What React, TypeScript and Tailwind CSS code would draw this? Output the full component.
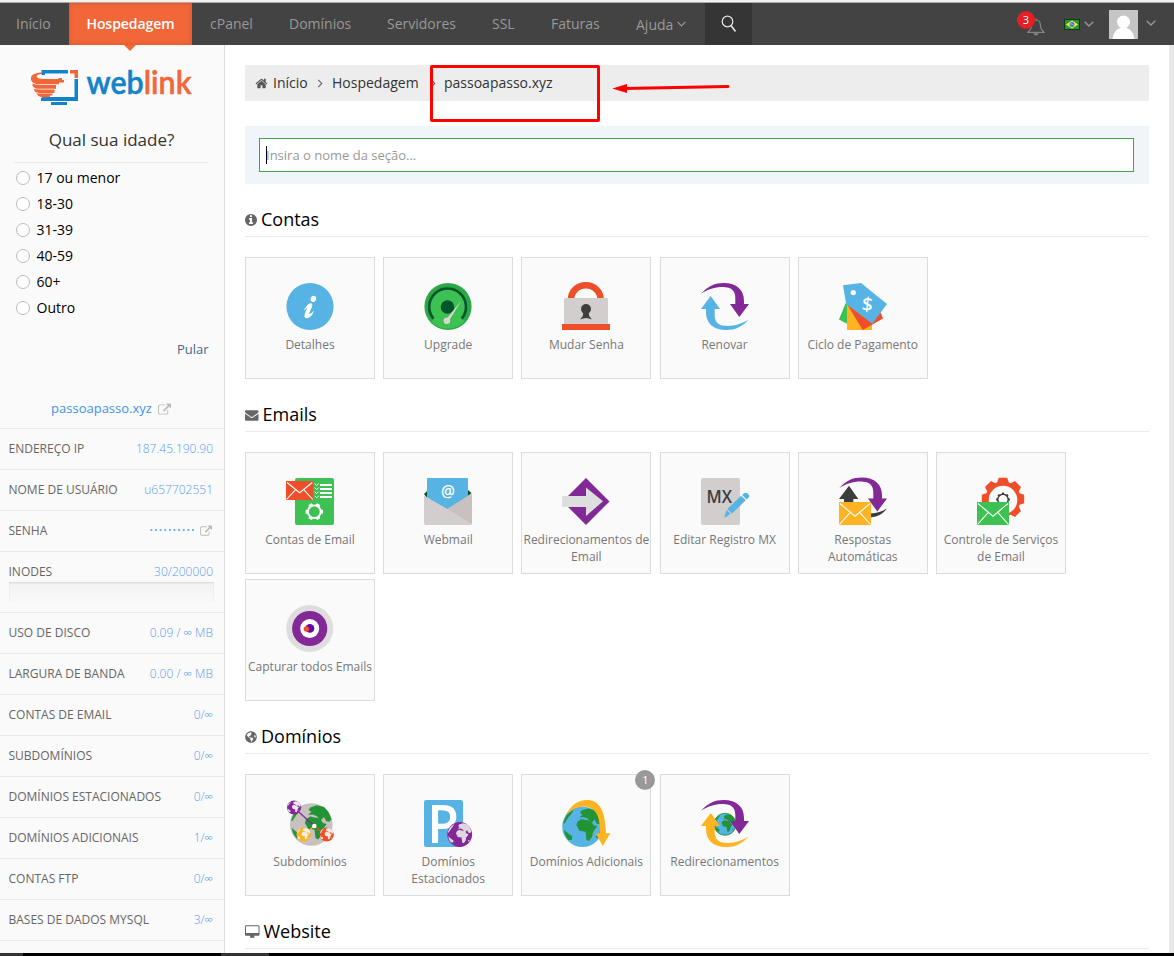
import React from "react";
import { FaGlobeAmericas } from "react-icons/fa";

const BLUE = "#56b3e3";
const PURPLE = "#832897";
const RED = "#ee4f2a";
const GREEN = "#3dc153";
const YELLOW = "#fdb322";
const LAND = "#229436";
const GREY = "#d1cecd";
const DARK = "#3d3d3d";

const SWOOP =
  "M0.3 10.5C7 3 14 0 22.5 0C36 0 43 7 43 18V21H48L38.3 34L29 21H34.3V15C34.3 8 31 4.6 24 4.2C15 3.6 8 6 0.3 10.5Z";

function Glyph({ d, box, className }: { d: string; box: string; className: string }) {
  return (
    <svg viewBox={box} className={className} fill="currentColor">
      <path d={d} />
    </svg>
  );
}

const EXTERNAL =
  "M1472 992v320q0 119-84.5 203.5t-203.5 84.5h-832q-119 0-203.5-84.5t-84.5-203.5v-832q0-119 84.5-203.5t203.5-84.5h704q14 0 23 9t9 23v64q0 14-9 23t-23 9h-704q-66 0-113 47t-47 113v832q0 66 47 113t113 47h832q66 0 113-47t47-113v-320q0-14 9-23t23-9h64q14 0 23 9t9 23zm384-864v512q0 26-19 45t-45 19-45-19l-176-176-652 652q-10 10-23 10t-23-10l-114-114q-10-10-10-23t10-23l652-652-176-176q-19-19-19-45t19-45 45-19h512q26 0 45 19t19 45z";
const HOME =
  "M1472 992v480q0 26-19 45t-45 19h-384v-384h-256v384h-384q-26 0-45-19t-19-45v-480q0-1 .5-3t.5-3l575-474 575 474q1 2 1 6zm223-69l-62 74q-8 9-21 11h-3q-13 0-21-7l-692-577-692 577q-12 8-24 7-13-2-21-11l-62-74q-8-10-7-23.5t11-21.5l719-599q32-26 76-26t76 26l244 204v-195q0-14 9-23t23-9h192q14 0 23 9t9 23v408l219 182q10 8 11 21.5t-7 23.5z";
const INFO =
  "M1152 1376v-160q0-14-9-23t-23-9h-96v-512q0-14-9-23t-23-9h-320q-14 0-23 9t-9 23v160q0 14 9 23t23 9h96v320h-96q-14 0-23 9t-9 23v160q0 14 9 23t23 9h448q14 0 23-9t9-23zm-128-896v-160q0-14-9-23t-23-9h-192q-14 0-23 9t-9 23v160q0 14 9 23t23 9h192q14 0 23-9t9-23zm640 416q0 209-103 385.5t-279.5 279.5-385.5 103-385.5-103-279.5-279.5-103-385.5 103-385.5 279.5-279.5 385.5-103 385.5 103 279.5 279.5 103 385.5z";
const MAIL =
  "M1792 710v794q0 66-47 113t-113 47h-1472q-66 0-113-47t-47-113v-794q44 49 101 87 362 246 497 345 57 42 92.5 65.5t94.5 48 110 24.5h2q51 0 110-24.5t94.5-48 92.5-65.5q170-123 498-345 57-39 100-87zm0-294q0 79-49 151t-122 123q-376 261-468 325-10 7-42.5 31t-54 38.5-52 32.5-57.5 27-50 9h-2q-23 0-50-9t-57.5-27-52-32.5-54-38.5-42.5-31q-91-64-262-182.5t-205-142.5q-62-42-117-115.5t-55-136.5q0-78 41.5-130t118.5-52h1472q65 0 112.5 47t47.5 113z";
const DESKTOP =
  "M1728 992v-832q0-13-9.5-22.5t-22.5-9.5h-1600q-13 0-22.5 9.5t-9.5 22.5v832q0 13 9.5 22.5t22.5 9.5h1600q13 0 22.5-9.5t9.5-22.5zm128-832v1088q0 66-47 113t-113 47h-544q0 37 16 77.5t32 71 16 43.5q0 26-19 45t-45 19h-512q-26 0-45-19t-19-45q0-14 16-44t32-70 16-78h-544q-66 0-113-47t-47-113v-1088q0-66 47-113t113-47h1600q66 0 113 47t47 113z";

function Globe({ x, y, r, sea, land, edge }: { x: number; y: number; r: number; sea: string; land: string; edge?: string }) {
  return (
    <g transform={`translate(${x} ${y}) scale(${r / 20})`}>
      <circle r="20" fill={sea} stroke={edge} strokeWidth={edge ? 1.6 : 0} />
      <g fill={land}>
        <path d="M-6-1.5L-5-5L-1-7.5L3-6.5L8-6L11-1.5L14.500-.5L10.500 5L9.500 10L6.500 14L4 13L3 5L-3 4Z" />
        <path d="M-3-9L0-12L-2.500-13.500L-1-16L5-18L12-16.500L16-12L19-5L17-2.500L14-3L12-7L9-4L5-8L1-9.500Z" />
        <path d="M-18.500 3L-15 6L-10 9.500L-10.500 13L-14 13L-17 8.500Z" />
        <path d="M-16-11L-9-17L-10-14L-14-9L-18-3L-19-4Z" />
        <circle cx="14.500" cy="10" r="1.300" />
      </g>
    </g>
  );
}

function Envelope({ w, h, y, color }: { w: number; h: number; y: number; color: string }) {
  return (
    <g>
      <rect y={y} width={w} height={h} fill={color} />
      <path
        d={`M1 ${y + 1.5}L${w / 2} ${y + h * 0.62}L${w - 1} ${y + 1.5}M0.500 ${y + h - 0.5}L${w * 0.36} ${y + h * 0.44}M${w - 0.5} ${y + h - 0.5}L${w * 0.64} ${y + h * 0.44}`}
        stroke="#fff"
        strokeWidth="1.1"
        fill="none"
      />
    </g>
  );
}

const teeth = (n: number, x: number, y: number, from: number, w: number, len: number, offset = 0) =>
  Array.from({ length: n }, (_, i) => (
    <path
      key={i}
      transform={`translate(${x} ${y}) rotate(${(i * 360) / n + offset})`}
      d={`M${-w / 2} ${-from}L${-w / 2 + w * 0.15} ${-from - len}H${w / 2 - w * 0.15}L${w / 2} ${-from}Z`}
    />
  ));

const art: Record<string, React.ReactNode> = {
  detalhes: (
    <>
      <circle cx="24" cy="23.500" r="23.600" fill={BLUE} />
      <ellipse cx="27.400" cy="15.900" rx="2.700" ry="3.200" transform="rotate(20 27.400 15.900)" fill="#fff" />
      <path d="M17.500 27.500C20 24 22 20.500 24.500 20.200C27 20 26.500 23 25.500 25C24 28.500 22.500 31 24 30.800C25.500 30.500 26.500 29 28 27.500C27 32 23.500 35.200 20.500 35.200C17.500 35 18 31.500 21.300 25C20 25.500 19 27 17.500 27.500Z" fill="#fff" />
    </>
  ),
  upgrade: (
    <>
      <circle cx="24" cy="23.500" r="23.600" fill="#2ba946" />
      <path d="M10 35.500A18.500 18.500 0 1 1 37 35.500L41 38A24 24 0 0 1 7 39Z" fill={GREEN} />
      <path d="M9.400 35.600A18.400 18.400 0 1 1 37.800 35.600" fill="none" stroke="#00552a" strokeWidth="2.600" />
      <circle cx="23.500" cy="24" r="6.800" fill="#00552a" />
      <path d="M37.300 17.800L24.500 38.500L22 36.500Z" fill="#d8d6cd" />
      <circle cx="22.900" cy="37.700" r="3.300" fill="#d8d6cd" />
    </>
  ),
  senha: (
    <>
      <path d="M9 16.500A14.800 14.300 0 0 1 38.600 16.500" fill="none" stroke={RED} strokeWidth="6.500" />
      <rect x="2" y="15" width="44" height="26.500" rx="1.500" fill={GREY} />
      <rect y="41" width="48" height="6" fill={RED} />
      <circle cx="24" cy="26" r="5" fill={DARK} />
      <path d="M21.500 28L20.800 33L18 36.500Q24 33.500 30 36.500L27.200 33L26.500 28Z" fill={DARK} />
    </>
  ),
  renovar: (
    <>
      <path d={SWOOP} fill={PURPLE} />
      <path d={SWOOP} fill={BLUE} transform="rotate(180 24 23.500)" />
    </>
  ),
  ciclo: (
    <>
      <path d="M6.700 20L0 36.500L8.500 41L12 26Z" fill={GREEN} />
      <path d="M8 21V47H33V36Z" fill={YELLOW} />
      <path d="M8.300 21.500L23.700 47L44 35.500L41.500 29Z" fill={RED} />
      <path d="M4 2.200L22 0L48 21L33.300 40.700L7.200 21Z" fill={BLUE} />
      <circle cx="14.300" cy="9.600" r="2.600" fill="#fff" />
      <text x="28.300" y="28" fontSize="19" fontWeight="600" textAnchor="middle" fill="#fff" transform="rotate(6 28.300 21)">$</text>
    </>
  ),
  contasEmail: (
    <>
      <rect x="9" width="39" height="47" rx="2" fill={GREEN} />
      <Envelope w={27.300} h={19} y={3} color={RED} />
      <path d="M34 7H46M34 11H46M34 15H46M34 19H46" stroke="#fff" strokeWidth="1.900" />
      <path d="M28.700 5.500L30.700 7.500L32.700 5.500M28.700 9.600L30.700 11.600L32.700 9.600M28.700 13.700L30.700 15.700L32.700 13.700M28.700 17.800L30.700 19.800L32.700 17.800" stroke="#fff" fill="none" />
      <circle cx="28.300" cy="33.700" r="6.300" fill="none" stroke="#fff" strokeWidth="1.800" />
      <g fill="#fff">{teeth(6, 28.3, 33.7, 6, 5, 2.700, 30)}</g>
    </>
  ),
  webmail: (
    <>
      <path d="M0 16L3 13V20ZM44 12L47.500 15L44 18Z" fill="#00552a" />
      <rect x="3" width="41" height="35" rx="1" fill={BLUE} />
      <path d="M0 17.500L23.300 31L48 15.500V45Q48 47 46 47H2Q0 47 0 45Z" fill={GREY} />
      <path d="M23.300 31L48 15.500V46Z" fill="#c9c0c0" />
      <text x="24" y="18.500" fontSize="15.500" fontWeight="600" textAnchor="middle" fill="#fff">@</text>
    </>
  ),
  redirEmail: (
    <>
      <path d="M24 0L47.500 23.400L24 47L0.500 23.400Z" fill={PURPLE} />
      <path d="M0 18H24V9.500L41 23.300L24 38V29H0Z" fill="#dedede" />
    </>
  ),
  mx: (
    <>
      <rect width="39" height="47" rx="2" fill={GREY} />
      <text x="5.500" y="24.500" fontSize="18" fontWeight="600" fill={DARK} textLength="25.500" lengthAdjust="spacingAndGlyphs">MX</text>
      <path d="M23 39.700L25.500 32L29.500 35.800L25.800 38.500ZM26.300 31L40.200 17.800L44.800 22.200L31 35.500ZM41.200 17L43 15.300Q45 14 47.200 16Q49.300 18.300 47.500 19.800L45.700 21.500Z" fill={BLUE} />
    </>
  ),
  respostas: (
    <>
      <path d={SWOOP} fill={PURPLE} transform="translate(0 -.5)" />
      <path d="M10 7.700L19.300 21H14.300V25H5V21H0Z" fill={DARK} />
      <path d="M48 30.300C44 36 39 38.800 31.500 39.200V35.500C38 35.500 43 33.500 48 30.300Z" fill={DARK} />
      <Envelope w={32} h={23} y={24} color={YELLOW} />
    </>
  ),
  controle: (
    <>
      <g fill={RED}>
        <circle cx="26" cy="21" r="17.500" />
        {teeth(8, 26, 21, 16, 12, 5.200)}
      </g>
      <circle cx="26" cy="22" r="14.300" fill="#fafafa" />
      <circle cx="26" cy="21.500" r="5.200" fill="none" stroke={DARK} strokeWidth="1.400" />
      <g fill={DARK}>{teeth(8, 26, 21.5, 5, 2.600, 1.900)}</g>
      <Envelope w={32} h={23} y={24} color={GREEN} />
    </>
  ),
  capturar: (
    <>
      <circle cx="23.700" cy="23.500" r="23.500" fill="#dedede" />
      <circle cx="23.700" cy="23.500" r="17.600" fill={PURPLE} />
      <circle cx="23.700" cy="23.500" r="9.500" fill="#fff" />
      <circle cx="23.900" cy="23.400" r="4.400" fill="#6408a8" />
      <circle cx="20.400" cy="24" r="2.800" fill={RED} />
    </>
  ),
  subdominios: (
    <>
      <Globe x={25.300} y={24.500} r={21.300} sea="#c9c0c0" land={LAND} />
      <path d="M10 9.500L28.300 26" stroke={PURPLE} strokeWidth="1.200" />
      <path d="M28.300 26L39 35" stroke={RED} strokeWidth="1.200" />
      <path d="M28.300 26L20 33" stroke={YELLOW} strokeWidth="1.200" />
      <Globe x={8} y={7.500} r={7} sea={PURPLE} land="#efe6ee" />
      <Globe x={17.700} y={34.500} r={7.100} sea={YELLOW} land="#f3efe6" />
      <Globe x={40.700} y={34.500} r={7.100} sea={RED} land="#f5e9e4" />
      <circle cx="28.300" cy="26" r="2.300" fill="#fff" />
    </>
  ),
  estacionados: (
    <>
      <rect width="39" height="47" rx="2" fill={BLUE} />
      <text x="3.300" y="43" fontSize="53" fontWeight="600" fill="#fff" textLength="31.500" lengthAdjust="spacingAndGlyphs">P</text>
      <Globe x={35.700} y={34.500} r={12.400} sea={PURPLE} land="#e0d6e0" />
    </>
  ),
  adicionais: (
    <>
      <Globe x={20.500} y={26.700} r={20.300} sea={BLUE} land={LAND} />
      <path d="M3.500 15.500C9 5 16 0 25 0C37 0 43.500 10 44 33.300H48.300L40.700 46L33.700 33.300H38C38 20 36 9.500 26 7C17 5 9 9.500 3.500 15.500Z" fill={YELLOW} />
    </>
  ),
  redir: (
    <>
      <Globe x={24} y={24.300} r={11} sea={BLUE} land={LAND} edge={LAND} />
      <path d={SWOOP} fill={PURPLE} />
      <path d={SWOOP} fill={YELLOW} transform="rotate(180 24 23.500)" />
    </>
  ),
};

type Item = { icon: string; label: string; badge?: string };

function Card({ icon, label, badge }: Item) {
  return (
    <a className="relative flex h-[122px] w-[130px] flex-col items-center border border-[#dcdcdc] bg-[#fafafa] pt-[25px]">
      <svg viewBox="0 0 48 47" className="h-[47px] w-[48px] shrink-0 overflow-visible">
        {art[icon]}
      </svg>
      <span className="mt-[6px] w-[128px] text-center text-[12px] leading-[17px] text-[#777]">{label}</span>
      {badge && (
        <span className="absolute -top-[5px] -right-[5px] flex size-5 items-center justify-center rounded-full bg-[#999] text-[11px] text-white">
          {badge}
        </span>
      )}
    </a>
  );
}

function Section({ title, icon, items }: { title: string; icon: React.ReactNode; items: Item[] }) {
  return (
    <section>
      <h2 className="flex h-[53px] items-center gap-[4px] border-b border-[#ebebeb] pt-[18px] text-[18px] leading-[24px] text-black">
        <span className="mt-[2px] text-[#666]">{icon}</span>
        {title}
      </h2>
      {items.length > 0 && (
        <div className="flex flex-wrap gap-x-[8.2px] gap-y-[5px] pt-5">
          {items.map((i) => (
            <Card key={i.label} {...i} />
          ))}
        </div>
      )}
    </section>
  );
}

const Chevron = ({ className }: { className: string }) => (
  <svg viewBox="0 0 10 6" className={className} fill="none" stroke="currentColor" strokeWidth="1.300">
    <path d="M.7.7L5 5L9.300.7" />
  </svg>
);

const Crumb = () => (
  <svg viewBox="0 0 6 10" className="h-[9px] w-[6px]" fill="none" stroke="#666" strokeWidth="1.200">
    <path d="M1 1L5 5L1 9" />
  </svg>
);

function Header() {
  return (
    <header className="flex h-[42px] shrink-0 bg-[#434343] text-[14px] text-[#999]">
      <a className="flex w-[69px] items-center pb-[2px] pl-[16px]">Início</a>
      <a className="relative flex w-[123px] items-center justify-center bg-[#f26739] pb-[2px] font-semibold tracking-[-0.05px] text-white shadow-[inset_0_0_5px_rgba(200,60,10,0.45)]">
        Hospedagem
        <svg viewBox="0 0 12 6" className="absolute top-[42px] left-[55px] z-10 h-[6px] w-[12px]">
          <path d="M0 0H12L6 6Z" fill="#f26739" />
        </svg>
      </a>
      <a className="flex w-[79px] items-center pb-[2px] pl-[18px]">cPanel</a>
      <a className="flex w-[98px] items-center pb-[2px] pl-[18px]">Domínios</a>
      <a className="flex w-[105px] items-center pb-[2px] pl-[18px]">Servidores</a>
      <a className="flex w-[59px] items-center pb-[2px] pl-[18px]">SSL</a>
      <a className="flex w-[85px] items-center pb-[2px] pl-[18px]">Faturas</a>
      <a className="flex w-[87px] items-center gap-1 pl-[18px]">
        Ajuda
        <Chevron className="h-[6px] w-[9px]" />
      </a>
      <div className="flex w-[47px] items-center justify-center bg-[#353535]">
        <svg viewBox="0 0 16 18" className="h-[18px] w-[16px]" fill="none" stroke="#e8e8e8" strokeWidth="1.200">
          <circle cx="6.500" cy="6.500" r="5.300" />
          <path d="M10 10.500L14.500 16.500" strokeWidth="1.500" />
        </svg>
      </div>
      <div className="ml-auto flex">
        <div className="relative h-[42px] w-[30px]">
          <svg viewBox="0 0 18 19" className="absolute top-[14px] left-[10px] h-[19px] w-[18px]" fill="none" stroke="#848484" strokeWidth="1.200">
            <path d="M9 1.500V3M1 15.300H17L14 11.500Q13.500 9.500 13.300 7Q12.800 3 9 3Q5.200 3 4.700 7Q4.500 9.500 4 11.500Z" />
            <path d="M6.500 16.300H11.500Q11 18.500 9 18.500Q7 18.500 6.500 16.300Z" fill="#848484" stroke="none" />
          </svg>
          <span className="absolute top-[8px] left-0 flex size-[18px] items-center justify-center rounded-full bg-[#e32024] text-[11px] text-white">3</span>
        </div>
        <svg viewBox="0 0 16 11" className="mt-[16px] ml-[17px] h-[11px] w-[16px]">
          <rect width="16" height="11" fill="#0a3a10" />
          <rect x="1" y="1" width="14" height="9" fill="#2f9434" />
          <path d="M8 1.500L14 5.500L8 9.500L2 5.500Z" fill="#f3ef3b" />
          <circle cx="8" cy="5.500" r="2.500" fill="#3f6fdc" />
          <path d="M5.900 4.900Q8.300 4.400 10 6.500" stroke="#dfe9f7" strokeWidth=".6" fill="none" />
        </svg>
        <Chevron className="mt-[18px] ml-[4px] h-[6px] w-[10px]" />
        <svg viewBox="0 0 29 29" className="mt-[7px] ml-[15px] h-[29px] w-[29px]">
          <rect width="29" height="29" fill="#c5c5c5" />
          <circle cx="14.500" cy="12" r="6.500" fill="#fff" />
          <path d="M3.500 29Q5 17.500 14.500 17.500Q24 17.500 25.500 29Z" fill="#fff" />
        </svg>
        <Chevron className="mt-[17px] mr-[18px] ml-[8px] h-[6px] w-[10px]" />
      </div>
    </header>
  );
}

function Logo() {
  return (
    <svg viewBox="0 0 162 36" className="mt-[25px] ml-[31px] h-[36px] w-[162px] shrink-0 overflow-visible">
      <path d="M37 0H10.500V5H14V3.500H37ZM43.500 9V27H14V26L10 28V31H47V9Z" fill="#1283c9" />
      <rect x="20" y="32" width="16" height="3" fill="#1283c9" />
      <path d="M39 0H47V8H43.500V3.500H39Z" fill="#f26739" />
      <path
        d="M11 2.200Q0 3.500 0 7.500V10Q1 13.500 7 14.200H28V12.500H33V10H31V8H27.500V9H14Q6 9 5.500 6.500Q6 4 11 4ZM1.500 13.500Q1 18 6 18.700H25V14.900H8Q4 14.900 1.500 13.500ZM3 18.700Q3 22.500 8 23H23.500V19.400H8Q5 19.400 3 18.700ZM5.500 23.200Q6.500 26.800 12 27.200H19V25.500H21.500V23.600H9Q7 23.600 5.500 23.200Z"
        fill="#f26739"
      />
      <text y="24.300" x="55.500" fontSize="32" fontWeight="600" fontFamily="Lato, sans-serif" textLength="105" lengthAdjust="spacingAndGlyphs" strokeWidth=".5" strokeLinejoin="round" fill="#1283c9" stroke="#1283c9">
        web<tspan fill="#f26739" stroke="#f26739">link</tspan>
      </text>
    </svg>
  );
}

function Row({ label, children }: { label: string; children: React.ReactNode }) {
  return (
    <div className="flex h-[41px] items-center justify-between border-t border-[#ebebeb] pr-[11px] pl-[8.500px] text-[12px] leading-[16px] text-[#666]">
      <span>{label}</span>
      <span className="flex items-center font-light text-[#5a9bee]">{children}</span>
    </div>
  );
}

const Inf = () => <span className="text-[12px] text-[#3f94ea]">∞</span>;

function Sidebar() {
  return (
    <aside className="flex w-[225px] shrink-0 flex-col overflow-hidden border-r border-[#dcdcdc] bg-[#fafafa]">
      <Logo />
      <div className="mt-[22px] mr-[15px] ml-[14px] border-b border-[#ebebeb] pb-[10px] text-center text-[17px] leading-[24px] text-[#333]">
        Qual sua idade?
      </div>
      <div className="mt-[2px] pl-4 text-[14px] text-black">
        {["17 ou menor", "18-30", "31-39", "40-59", "60+", "Outro"].map((o) => (
          <label key={o} className="flex h-[26px] items-center gap-[6.500px]">
            <span className="size-[14px] rounded-full border border-[#bbb] bg-white" />
            <span className="pb-[2px]">{o}</span>
          </label>
        ))}
      </div>
      <a className="mt-[18px] mr-[15.500px] text-right text-[13px] leading-[20px] text-[#46678c]">Pular</a>
      <a className="mt-[40px] mb-[9px] flex h-[20px] items-center justify-center gap-[6px] pr-px text-[13px] text-[#3f94ea]">
        passoapasso.xyz
        <Glyph d={EXTERNAL} box="64 0 1920 1792" className="h-[13px] w-[14px] text-[#bbb]" />
      </a>
      <Row label="ENDEREÇO IP">187.45.190.90</Row>
      <Row label="NOME DE USUÁRIO">u657702551</Row>
      <Row label="SENHA">
        <svg viewBox="0 0 44 2" className="mr-[6px] mb-[2px] h-[2px] w-[44px]">
          <path d="M.5 1H44" stroke="#3f94ea" strokeWidth="1.500" strokeDasharray="1.800 2.820" />
        </svg>
        <Glyph d={EXTERNAL} box="64 0 1920 1792" className="h-[12px] w-[13px] text-[#bbb]" />
      </Row>
      <div className="h-[61px] shrink-0 border-t border-[#ebebeb] pr-[10px] pl-[8.500px] text-[12px] text-[#666]">
        <div className="flex h-[30px] justify-between pt-[12px] leading-[16px]">
          <span>INODES</span>
          <span className="pr-px font-light text-[#5a9bee]">30/200000</span>
        </div>
        <div className="h-[20px] bg-linear-to-b from-[#f2f2f2] to-[#f9f9f9] shadow-[inset_0_1px_2px_rgba(0,0,0,0.12)]" />
      </div>
      <Row label="USO DE DISCO">0.09 /&nbsp;<Inf />&nbsp;MB</Row>
      <Row label="LARGURA DE BANDA">0.00 /&nbsp;<Inf />&nbsp;MB</Row>
      <Row label="CONTAS DE EMAIL">0/<Inf /></Row>
      <Row label="SUBDOMÍNIOS">0/<Inf /></Row>
      <Row label="DOMÍNIOS ESTACIONADOS">0/<Inf /></Row>
      <Row label="DOMÍNIOS ADICIONAIS">1/<Inf /></Row>
      <Row label="CONTAS FTP">0/<Inf /></Row>
      <Row label="BASES DE DADOS MYSQL">3/<Inf /></Row>
      <div className="h-[13px] border-t border-[#ebebeb]" />
    </aside>
  );
}

export default function App() {
  return (
    <div className="flex h-[956px] w-[1174px] flex-col overflow-hidden bg-white font-['Open_Sans',sans-serif]">
      <div className="h-[3px] shrink-0 border-b border-[#aaa] bg-[#f2f2f2]" />
      <Header />
      <div className="flex h-[908px] shrink-0 overflow-hidden">
        <Sidebar />
        <main className="min-w-0 flex-1 px-5 pt-5">
          <nav className="relative flex h-[36px] items-center bg-[#ededed] pl-[10px] text-[14px] text-[#333]">
            <Glyph d={HOME} box="0 0 1792 1792" className="mr-[5px] h-[13px] w-[13px] text-[#555]" />
            <span className="w-[44px] pb-[2px]">Início</span>
            <Crumb />
            <span className="ml-[9px] w-[98px] pb-[2px]">Hospedagem</span>
            <Crumb />
            <span className="ml-[8px] pb-[2px]">passoapasso.xyz</span>
            <div className="absolute top-0 left-[185px] h-[57px] w-[170px] rounded-[2px] border-[3px] border-[#fe0000]" />
            <svg viewBox="0 0 118 12" className="absolute top-[17px] left-[367px] h-[12px] w-[118px]">
              <path d="M.3 6.500L15 2V11Z" fill="#fe0000" />
              <path d="M12 6.500L116 4.500" stroke="#fe0000" strokeWidth="2.800" strokeLinecap="round" />
            </svg>
          </nav>
          <div className="mt-[25px] h-[58px] bg-[#f0f5f9] px-[14px] pt-[12px] pr-[15px]">
            <div className="flex h-[34px] items-center border border-[#3aa64d] bg-white pl-[6px] text-[13px] text-[#999]">
              <span className="h-[18px] w-px bg-black" />
              <span className="-ml-px pt-px">Insira o nome da seção...</span>
            </div>
          </div>
          <Section
            title="Contas"
            icon={<Glyph d={INFO} box="128 128 1536 1536" className="h-[12px] w-[12px]" />}
            items={[
              { icon: "detalhes", label: "Detalhes" },
              { icon: "upgrade", label: "Upgrade" },
              { icon: "senha", label: "Mudar Senha" },
              { icon: "renovar", label: "Renovar" },
              { icon: "ciclo", label: "Ciclo de Pagamento" },
            ]}
          />
          <Section
            title="Emails"
            icon={<Glyph d={MAIL} box="0 128 1792 1536" className="h-[12px] w-[13.500px]" />}
            items={[
              { icon: "contasEmail", label: "Contas de Email" },
              { icon: "webmail", label: "Webmail" },
              { icon: "redirEmail", label: "Redirecionamentos de Email" },
              { icon: "mx", label: "Editar Registro MX" },
              { icon: "respostas", label: "Respostas Automáticas" },
              { icon: "controle", label: "Controle de Serviços de Email" },
              { icon: "capturar", label: "Capturar todos Emails" },
            ]}
          />
          <Section
            title="Domínios"
            icon={<FaGlobeAmericas className="size-[12px]" />}
            items={[
              { icon: "subdominios", label: "Subdomínios" },
              { icon: "estacionados", label: "Domínios Estacionados" },
              { icon: "adicionais", label: "Domínios Adicionais", badge: "1" },
              { icon: "redir", label: "Redirecionamentos" },
            ]}
          />
          <Section
            title="Website"
            icon={<Glyph d={DESKTOP} box="-64 0 1920 1792" className="h-[14px] w-[14.500px]" />}
            items={[]}
          />
        </main>
        <div className="w-[5px] shrink-0 bg-[#e8e8e8]" />
      </div>
      <div className="flex h-[3px] shrink-0 bg-black">
        <div className="w-[23px] bg-[#333]" />
        <div className="ml-[198px] w-[48px] bg-[#333]" />
      </div>
    </div>
  );
}
